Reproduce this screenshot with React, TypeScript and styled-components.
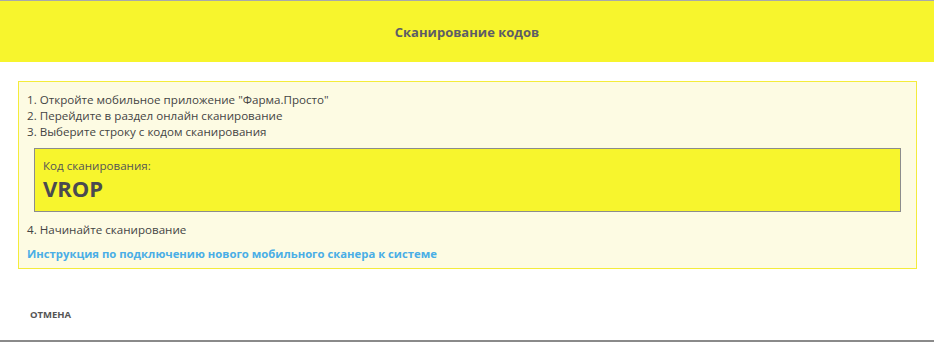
import styled, { createGlobalStyle } from "styled-components";

const GlobalStyle = createGlobalStyle`
    html, body {
        margin: 0;
        padding: 0;
        background: #ffffff;
    }
    body {
        font-family: "Open Sans", "Noto Sans", Arial, sans-serif;
        color: #444444;
    }
`;

const steps = [
    '1. Откройте мобильное приложение "Фарма.Просто"',
    "2. Перейдите в раздел онлайн сканирование",
    "3. Выберите строку с кодом сканирования",
];

const App = () => {
    return (
        <>
            <GlobalStyle />
            <Dialog>
                <Header>Сканирование кодов</Header>
                <Body>
                    <Panel>
                        {steps.map((step) => (
                            <Step key={step}>{step}</Step>
                        ))}
                        <CodeBox>
                            <CodeLabel>Код сканирования:</CodeLabel>
                            <CodeValue>VROP</CodeValue>
                        </CodeBox>
                        <Step $spaced>4. Начинайте сканирование</Step>
                        <HelpLink href="#">
                            Инструкция по подключению нового мобильного сканера к системе
                        </HelpLink>
                    </Panel>
                </Body>
                <Footer>
                    <CancelButton>Отмена</CancelButton>
                </Footer>
            </Dialog>
        </>
    );
};

const Dialog = styled.div`
    width: 934px;
    height: 342px;
    box-sizing: border-box;
    border-top: 1px solid #a9a9a9;
    border-bottom: 2px solid #8a8a8a;
    display: flex;
    flex-direction: column;
    background: #ffffff;
`;

const Header = styled.div`
    height: 61px;
    background-color: #f7f52d;
    display: flex;
    align-items: center;
    justify-content: center;
    font-size: 13px;
    font-weight: 700;
    color: #5d5d66;
`;

const Body = styled.div`
    padding: 19px 17px 0 18px;
`;

const Panel = styled.div`
    border: 1px solid #f4ec3c;
    background-color: #fdfbe3;
    padding: 10px 8px 6px 8px;
    display: flex;
    flex-direction: column;
`;

const Step = styled.div<{ $spaced?: boolean }>`
    font-size: 11.6px;
    line-height: 16px;
    color: #444444;
    margin-top: ${(p) => (p.$spaced ? "10px" : "0")};
`;

const CodeBox = styled.div`
    margin: 8px 7px 0 7px;
    height: 64px;
    box-sizing: border-box;
    border: 1px solid #8c8c8c;
    background-color: #f7f52d;
    padding: 9px 8px 0 8px;
    display: flex;
    flex-direction: column;
`;

const CodeLabel = styled.div`
    font-size: 11.6px;
    line-height: 16px;
    color: #555555;
`;

const CodeValue = styled.div`
    font-size: 22px;
    font-weight: 700;
    line-height: 28px;
    color: #4a4a50;
`;

const HelpLink = styled.a`
    margin-top: 8px;
    font-size: 11.3px;
    line-height: 16px;
    font-weight: 700;
    color: #4aaee6;
    text-decoration: none;
`;

const Footer = styled.div`
    display: flex;
    padding: 39px 0 0 30px;
`;

const CancelButton = styled.button`
    border: none;
    background: none;
    padding: 0;
    font-family: inherit;
    font-size: 9.5px;
    line-height: 14px;
    font-weight: 700;
    text-transform: uppercase;
    color: #555555;
    cursor: pointer;
`;

export default App;
